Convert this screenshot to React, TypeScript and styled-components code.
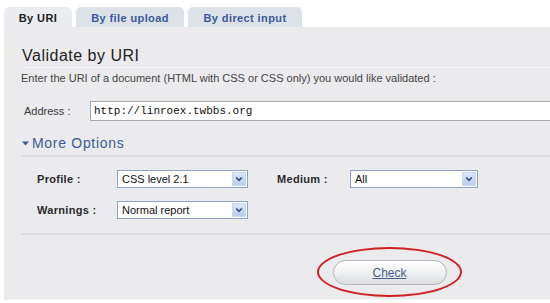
import React from 'react';
import styled, { createGlobalStyle } from 'styled-components';

const GlobalStyle = createGlobalStyle`
  html, body {
    margin: 0;
    padding: 0;
    background: #ffffff;
    overflow: hidden;
  }
  body {
    font-family: 'Liberation Sans', Arial, sans-serif;
  }
`;

const Page = styled.div`
  width: 560px;
  height: 303px;
  padding: 7px 0 0 4px;
  box-sizing: border-box;
`;

const TabBar = styled.div`
  display: flex;
  gap: 4px;
  height: 20px;
`;

const Tab = styled.div<{ $active?: boolean; $width: number }>`
  display: flex;
  align-items: center;
  justify-content: center;
  width: ${(p) => p.$width}px;
  border-radius: 5px 5px 0 0;
  background: ${(p) => (p.$active ? '#ebecef' : '#dde1e8')};
  color: ${(p) => (p.$active ? '#1f1f1f' : '#3a5a9c')};
  font-size: 11px;
  font-weight: bold;
  letter-spacing: 0.4px;
  padding-top: 2px;
  box-sizing: border-box;
`;

const Panel = styled.div`
  background: #ebebee;
  height: 273px;
  padding: 20px 0 0 17px;
  box-sizing: border-box;
  border-bottom: 1px solid #f4f4f6;
`;

const Title = styled.h2`
  margin: 0;
  font-size: 16px;
  line-height: 18px;
  font-weight: normal;
  letter-spacing: 0.5px;
  color: #222222;
  padding: 0 0 2px 1px;
  border-bottom: 1px solid #f4f4f6;
`;

const Intro = styled.p`
  margin: 4px 0 0;
  font-size: 11px;
  line-height: 13px;
  color: #444444;
`;

const AddressRow = styled.div`
  display: flex;
  align-items: center;
  margin-top: 16px;
  padding-left: 3px;
`;

const Label = styled.span<{ $bold?: boolean; $width: number }>`
  width: ${(p) => p.$width}px;
  flex: none;
  font-size: 11px;
  font-weight: ${(p) => (p.$bold ? 'bold' : 'normal')};
  color: ${(p) => (p.$bold ? '#2a2a2a' : '#3a3a3a')};
  letter-spacing: ${(p) => (p.$bold ? '0.3px' : '0')};
`;

const AddressInput = styled.div`
  flex: 1;
  height: 20px;
  box-sizing: border-box;
  background: #ffffff;
  border: 1px solid #a9a9ab;
  border-right: none;
  padding: 2px 0 0 3px;
  font-family: 'Liberation Mono', 'Courier New', monospace;
  font-size: 11px;
  color: #111111;
  line-height: 14px;
`;

const Section = styled.div`
  margin-top: 14px;
  display: flex;
  align-items: center;
  gap: 3px;
  padding: 0 0 4px 1px;
  border-bottom: 2px solid #dcdde0;
  color: #3a5a9a;
  font-size: 14px;
  line-height: 16px;
  letter-spacing: 0.7px;
`;

const Options = styled.div`
  display: grid;
  grid-template-columns: 80px 160px 73px 128px;
  row-gap: 13px;
  align-items: center;
  padding: 13px 0 14px 16px;
  border-bottom: 2px solid #dcdde0;
`;

const Select = styled.div<{ $width: number }>`
  display: flex;
  align-items: center;
  width: ${(p) => p.$width}px;
  height: 18px;
  box-sizing: border-box;
  background: #ffffff;
  border: 1px solid #8ea2c6;
  padding-right: 1px;
  font-size: 11px;
  color: #111111;
`;

const SelectText = styled.span`
  flex: 1;
  padding-left: 4px;
`;

const SelectArrow = styled.span`
  width: 14px;
  height: 14px;
  display: flex;
  align-items: center;
  justify-content: center;
  background: linear-gradient(#dbe6fa, #b9cdf0);
  border: 1px solid #c9d7f0;
  box-sizing: border-box;
`;

const Footer = styled.div`
  display: flex;
  padding: 12px 0 0 296px;
`;

const Ring = styled.div`
  display: flex;
  align-items: center;
  justify-content: center;
  width: 145px;
  height: 50px;
  border: 2px solid #d01f25;
  border-radius: 50%;
  box-sizing: border-box;
`;

const CheckButton = styled.button`
  width: 114px;
  height: 25px;
  border-radius: 13px;
  border: 1px solid #b4b6bb;
  background: linear-gradient(#ffffff, #eeeff1 55%, #dcdde0);
  font-family: 'Liberation Sans', Arial, sans-serif;
  font-size: 12px;
  color: #4a5e8f;
  text-decoration: underline;
  padding: 0;
  margin-top: 1px;
`;

const Arrow = () => (
  <svg width="8" height="6" viewBox="0 0 8 6">
    <path d="M1.2 1.5 L4 4.3 L6.8 1.5" fill="none" stroke="#2f4a86" strokeWidth="1.6" />
  </svg>
);

const Triangle = () => (
  <svg width="7" height="5" viewBox="0 0 7 5">
    <path d="M0 0.5 L7 0.5 L3.5 4.5 Z" fill="#3a5a9a" />
  </svg>
);

const Dropdown = ({ width, value }: { width: number; value: string }) => (
  <Select $width={width}>
    <SelectText>{value}</SelectText>
    <SelectArrow>
      <Arrow />
    </SelectArrow>
  </Select>
);

const App = () => {
  return (
    <Page>
      <GlobalStyle />
      <TabBar>
        <Tab $active $width={68}>By URI</Tab>
        <Tab $width={108}>By file upload</Tab>
        <Tab $width={114}>By direct input</Tab>
      </TabBar>
      <Panel>
        <Title>Validate by URI</Title>
        <Intro>
          Enter the URI of a document (HTML with CSS or CSS only) you would like validated :
        </Intro>
        <AddressRow>
          <Label $width={66}>Address :</Label>
          <AddressInput>http://linroex.twbbs.org</AddressInput>
        </AddressRow>
        <Section>
          <Triangle />
          More Options
        </Section>
        <Options>
          <Label $bold $width={80}>Profile :</Label>
          <Dropdown width={131} value="CSS level 2.1" />
          <Label $bold $width={73}>Medium :</Label>
          <Dropdown width={128} value="All" />
          <Label $bold $width={80}>Warnings :</Label>
          <Dropdown width={131} value="Normal report" />
        </Options>
        <Footer>
          <Ring>
            <CheckButton>Check</CheckButton>
          </Ring>
        </Footer>
      </Panel>
    </Page>
  );
};

export default App;
